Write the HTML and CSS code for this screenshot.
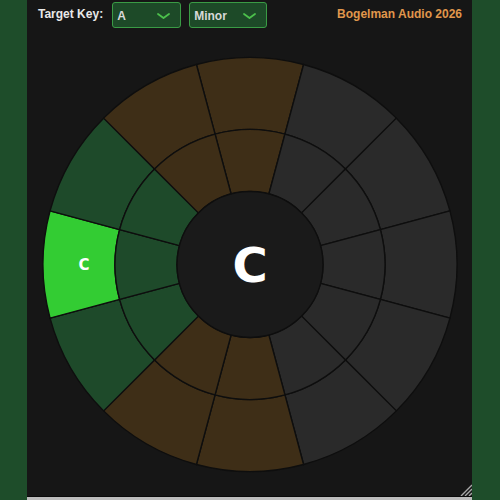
FILE: index.html
```html
<!DOCTYPE html>
<html lang="en">
<head>
<meta charset="utf-8">
<title>Key Wheel</title>
<link rel="stylesheet" href="styles.css">
</head>
<body>
<div class="panel">
  <header class="topbar">
    <span class="label">Target Key:</span>
    <div class="picker picker-key">
      <span class="picker-value">A</span>
      <svg class="chevron" width="13" height="6" viewBox="0 0 13 6"><path d="M1 1 L6.5 5 L12 1" /></svg>
    </div>
    <div class="picker picker-mode">
      <span class="picker-value">Minor</span>
      <svg class="chevron" width="13" height="6" viewBox="0 0 13 6"><path d="M1 1 L6.5 5 L12 1" /></svg>
    </div>
    <span class="brand">Bogelman Audio 2026</span>
  </header>

  <svg class="wheel" width="445" height="468" viewBox="-223 -236.5 445 468">
    <!-- outer ring: 12 keys, top key centred at 12 o'clock -->
    <g class="ring">
      <path class="seg-brown" d="M-53.58 -199.95 A207 207 0 0 1 53.58 -199.95 L34.94 -130.40 A135 135 0 0 0 -34.94 -130.40 Z"/>
      <path class="seg-grey" d="M53.58 -199.95 A207 207 0 0 1 146.37 -146.37 L95.46 -95.46 A135 135 0 0 0 34.94 -130.40 Z"/>
      <path class="seg-grey" d="M146.37 -146.37 A207 207 0 0 1 199.95 -53.58 L130.40 -34.94 A135 135 0 0 0 95.46 -95.46 Z"/>
      <path class="seg-grey" d="M199.95 -53.58 A207 207 0 0 1 199.95 53.58 L130.40 34.94 A135 135 0 0 0 130.40 -34.94 Z"/>
      <path class="seg-grey" d="M199.95 53.58 A207 207 0 0 1 146.37 146.37 L95.46 95.46 A135 135 0 0 0 130.40 34.94 Z"/>
      <path class="seg-grey" d="M146.37 146.37 A207 207 0 0 1 53.58 199.95 L34.94 130.40 A135 135 0 0 0 95.46 95.46 Z"/>
      <path class="seg-brown" d="M53.58 199.95 A207 207 0 0 1 -53.58 199.95 L-34.94 130.40 A135 135 0 0 0 34.94 130.40 Z"/>
      <path class="seg-brown" d="M-53.58 199.95 A207 207 0 0 1 -146.37 146.37 L-95.46 95.46 A135 135 0 0 0 -34.94 130.40 Z"/>
      <path class="seg-green" d="M-146.37 146.37 A207 207 0 0 1 -199.95 53.58 L-130.40 34.94 A135 135 0 0 0 -95.46 95.46 Z"/>
      <path class="seg-active" d="M-199.95 53.58 A207 207 0 0 1 -199.95 -53.58 L-130.40 -34.94 A135 135 0 0 0 -130.40 34.94 Z"/>
      <path class="seg-green" d="M-199.95 -53.58 A207 207 0 0 1 -146.37 -146.37 L-95.46 -95.46 A135 135 0 0 0 -130.40 -34.94 Z"/>
      <path class="seg-brown" d="M-146.37 -146.37 A207 207 0 0 1 -53.58 -199.95 L-34.94 -130.40 A135 135 0 0 0 -95.46 -95.46 Z"/>
    </g>
    <!-- inner ring -->
    <g class="ring">
      <path class="seg-brown" d="M-34.94 -130.40 A135 135 0 0 1 34.94 -130.40 L18.89 -70.51 A73 73 0 0 0 -18.89 -70.51 Z"/>
      <path class="seg-grey" d="M34.94 -130.40 A135 135 0 0 1 95.46 -95.46 L51.62 -51.62 A73 73 0 0 0 18.89 -70.51 Z"/>
      <path class="seg-grey" d="M95.46 -95.46 A135 135 0 0 1 130.40 -34.94 L70.51 -18.89 A73 73 0 0 0 51.62 -51.62 Z"/>
      <path class="seg-grey" d="M130.40 -34.94 A135 135 0 0 1 130.40 34.94 L70.51 18.89 A73 73 0 0 0 70.51 -18.89 Z"/>
      <path class="seg-grey" d="M130.40 34.94 A135 135 0 0 1 95.46 95.46 L51.62 51.62 A73 73 0 0 0 70.51 18.89 Z"/>
      <path class="seg-grey" d="M95.46 95.46 A135 135 0 0 1 34.94 130.40 L18.89 70.51 A73 73 0 0 0 51.62 51.62 Z"/>
      <path class="seg-brown" d="M34.94 130.40 A135 135 0 0 1 -34.94 130.40 L-18.89 70.51 A73 73 0 0 0 18.89 70.51 Z"/>
      <path class="seg-brown" d="M-34.94 130.40 A135 135 0 0 1 -95.46 95.46 L-51.62 51.62 A73 73 0 0 0 -18.89 70.51 Z"/>
      <path class="seg-green" d="M-95.46 95.46 A135 135 0 0 1 -130.40 34.94 L-70.51 18.89 A73 73 0 0 0 -51.62 51.62 Z"/>
      <path class="seg-green" d="M-130.40 34.94 A135 135 0 0 1 -130.40 -34.94 L-70.51 -18.89 A73 73 0 0 0 -70.51 18.89 Z"/>
      <path class="seg-green" d="M-130.40 -34.94 A135 135 0 0 1 -95.46 -95.46 L-51.62 -51.62 A73 73 0 0 0 -70.51 -18.89 Z"/>
      <path class="seg-brown" d="M-95.46 -95.46 A135 135 0 0 1 -34.94 -130.40 L-18.89 -70.51 A73 73 0 0 0 -51.62 -51.62 Z"/>
    </g>
    <circle class="hub" cx="0" cy="0" r="73"/>
    <text class="seg-label" x="-166" y="5.5">C</text>
    <text class="hub-label" x="0" y="17.5">C</text>
  </svg>

  <div class="hscroll"></div>
  <svg class="grip" width="12" height="12" viewBox="0 0 12 12">
    <path d="M12 1 L1 12 M12 5 L5 12 M12 9 L9 12"/>
  </svg>
</div>
</body>
</html>
```

FILE: styles.css
```css
html, body {
  margin: 0;
  padding: 0;
}

body {
  width: 500px;
  height: 500px;
  overflow: hidden;
  background: #1e4d2a;
  font-family: "Liberation Sans", Arial, sans-serif;
}

.panel {
  position: relative;
  margin-left: 27px;
  width: 445px;
  height: 500px;
  background: #161616;
  display: flex;
  flex-direction: column;
}

.topbar {
  height: 28px;
  display: flex;
  align-items: center;
  padding: 0 10px 0 11px;
  font-size: 12px;
  font-weight: bold;
}

.label {
  color: #e8e8e8;
  margin-right: 9px;
}

.picker {
  box-sizing: border-box;
  height: 26px;
  margin-top: 1px;
  display: flex;
  align-items: center;
  padding-left: 4px;
  background: #1d4a28;
  border: 1px solid #3a9b45;
  border-radius: 3px;
  color: #d8d8d8;
}

.picker-key {
  width: 69px;
  margin-right: 8px;
}

.picker-mode {
  width: 78px;
}

.picker-value {
  flex: 1;
  margin-top: 2px;
}

.chevron {
  margin-right: 10px;
  margin-top: 2px;
}

.chevron path {
  fill: none;
  stroke: #4cc04c;
  stroke-width: 1.8;
  stroke-linecap: round;
  stroke-linejoin: round;
}

.brand {
  margin-left: auto;
  color: #e0974c;
}

.wheel {
  display: block;
}

.ring path {
  stroke: #0e0e0e;
  stroke-width: 1.4;
  stroke-linejoin: round;
}

.seg-brown { fill: #3e2e17; }
.seg-grey { fill: #2a2a2a; }
.seg-green { fill: #1e4a2a; }
.seg-active { fill: #33cc33; }

.hub {
  fill: #1a1a1a;
  stroke: #0e0e0e;
  stroke-width: 1.4;
}

.seg-label,
.hub-label {
  font-family: "DejaVu Sans", Verdana, sans-serif;
  font-weight: bold;
  fill: #ffffff;
  text-anchor: middle;
}

.seg-label { font-size: 15px; }
.hub-label { font-size: 48px; }

.hscroll {
  height: 3px;
  border-top: 1px solid #0a0a0a;
  background: #bdbdbd;
}

.grip {
  position: absolute;
  right: 0;
  bottom: 4px;
}

.grip path {
  fill: none;
  stroke: #a8a8a8;
  stroke-width: 1.4;
}
```
